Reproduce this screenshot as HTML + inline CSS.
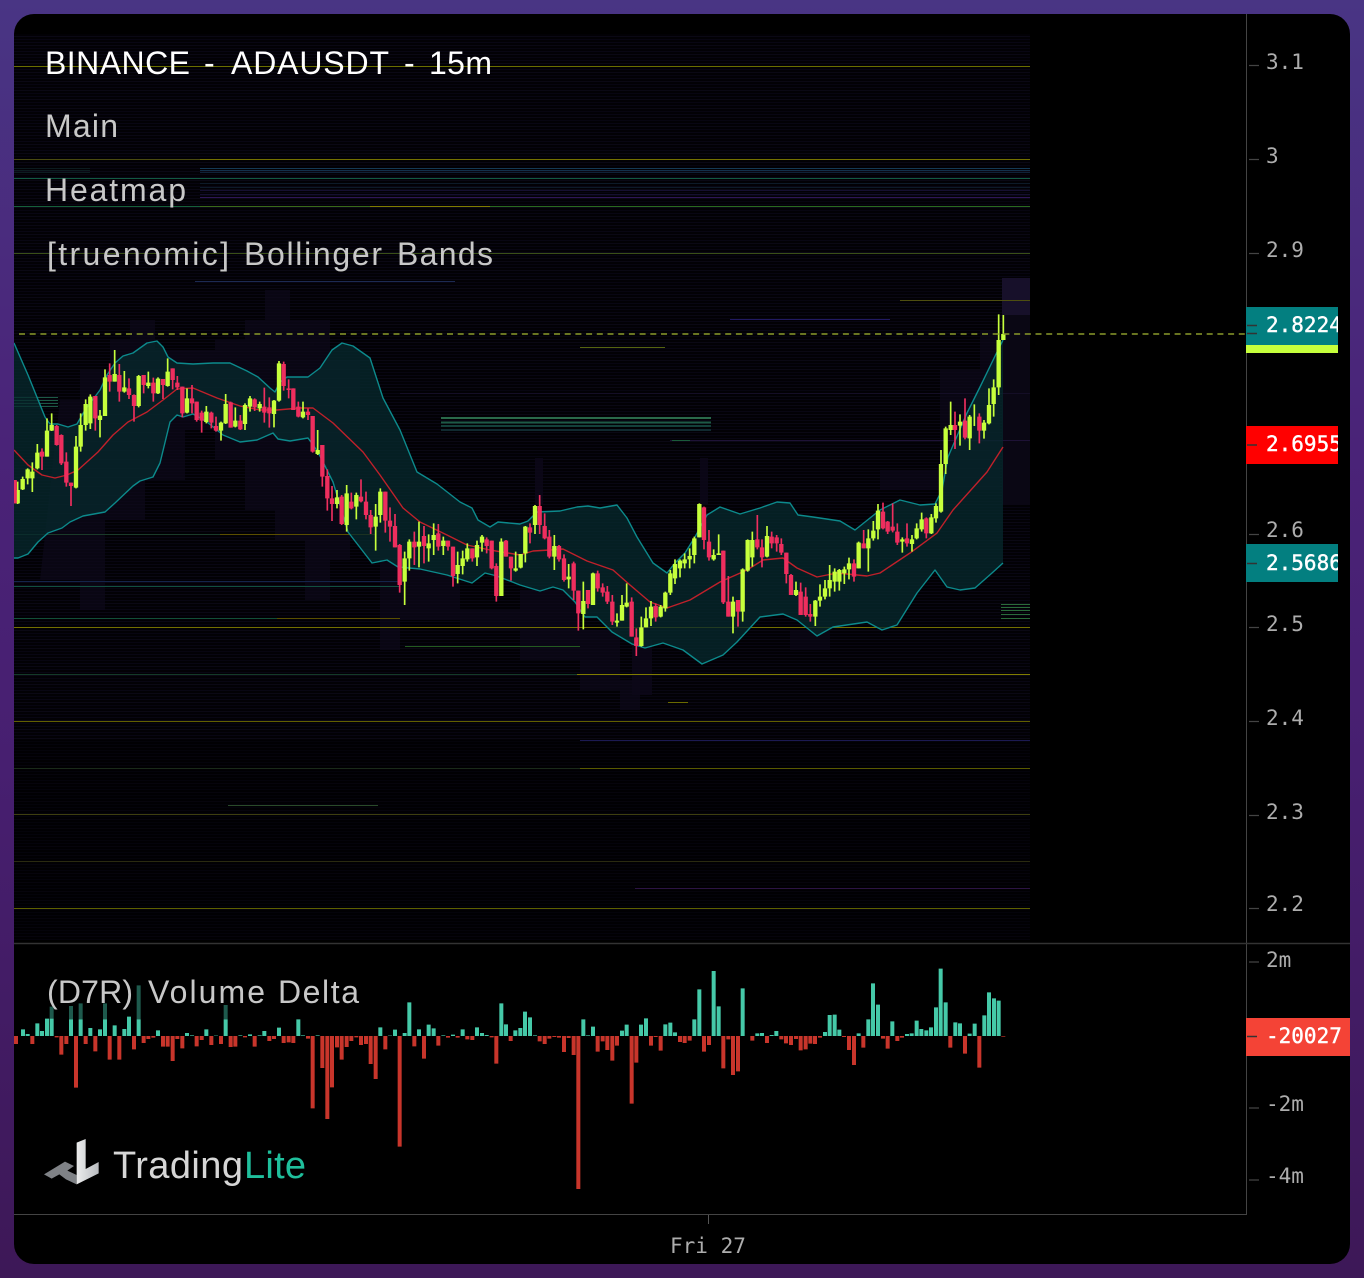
<!DOCTYPE html>
<html lang="en"><head><meta charset="utf-8"><title>TradingLite chart</title>
<style>html,body{margin:0;padding:0;width:1364px;height:1278px;overflow:hidden;background:#451b6a}svg{display:block}
.m{font-family:"Liberation Sans",sans-serif}.a{font-family:"DejaVu Sans Mono","Liberation Mono",monospace;font-size:21px;fill:#adadad}.w{fill:#fff;stroke:#fff;stroke-width:.4}</style></head>
<body>
<svg xmlns="http://www.w3.org/2000/svg" width="1364" height="1278" viewBox="0 0 1364 1278">
<defs>
<linearGradient id="bg" x1="0" y1="0" x2="0" y2="1"><stop offset="0" stop-color="#493584"/><stop offset=".35" stop-color="#4a2378"/><stop offset=".6" stop-color="#471f70"/><stop offset="1" stop-color="#3d1857"/></linearGradient>
<linearGradient id="lg" x1="0" y1="0" x2="1" y2="0"><stop offset="0" stop-color="#eceded"/><stop offset="1" stop-color="#b9bcc0"/></linearGradient>
<pattern id="st" width="16" height="9" patternUnits="userSpaceOnUse"><rect width="16" height="9" fill="#020105"/><rect y="0" width="16" height="1" fill="#0a0814"/><rect y="3" width="16" height="1" fill="#070511"/><rect y="6" width="16" height="1" fill="#080613"/></pattern>
<clipPath id="card"><rect x="14" y="14" width="1336" height="1250" rx="20"/></clipPath>
<clipPath id="ax"><rect x="1246" y="300" width="92" height="300"/></clipPath>
</defs>
<rect width="1364" height="1278" fill="url(#bg)"/>
<g clip-path="url(#card)">
<rect x="14" y="14" width="1336" height="1250" fill="#000"/>
<rect x="14" y="34" width="1016" height="906" fill="url(#st)"/>
<rect x="14" y="740" width="1016" height="200" fill="#000" opacity=".4"/>
<!-- heat volume columns -->
<g fill="#0d0819">
<path d="M60 400h20v-30h30v-30h20v-20h25v30h60v-10h30v-20h20v-30h25v30h40v40h30v40h-10v160h-20v40h-25v-60h-30v-30h-30v-50h-30v-30h-30v50h-40v40h-40v90h-25v-30h-40z" opacity=".7"/>
<path d="M380 500h20v70h60v40h60v-20h60v40h40v50h20v30h-20v-20h-40v-30h-60v-30h-60v-10h-60v30h-20z" opacity=".7"/>
<rect x="535" y="458" width="8" height="46" opacity=".8"/><rect x="700" y="458" width="8" height="46" opacity=".8"/>
<path d="M880 470h60v-100h40v-40h20v160h-120z" opacity=".7"/>
<rect x="1002" y="278" width="28" height="37" fill="#17102a"/>
<rect x="1002" y="315" width="28" height="190" fill="#0a0714"/>
<rect x="632" y="640" width="20" height="55" opacity=".8"/><rect x="790" y="630" width="40" height="20" opacity=".6"/>
</g>
<g fill="none" stroke-width="1">
<path d="M14 168.5H90M14 170.5H90M14 172.5H90" stroke="#0c1c20"/>
<path d="M200 168.5H1030" stroke="#153a55"/><path d="M200 170.5H1030" stroke="#12304a"/><path d="M200 172.5H1030" stroke="#0f2238"/>
<path d="M200 183.5H1030M200 187.5H1030" stroke="#0d1a28"/><path d="M200 190.5H1030M200 194.5H1030" stroke="#151030"/>
<path d="M14 66.5H1030" stroke="#6a6e00"/>
<path d="M14 159.5H200" stroke="#4a4a10"/><path d="M200 159.5H1030" stroke="#747000"/>
<path d="M14 178.5H1030" stroke="#125a42"/>
<path d="M200 197.5H1030" stroke="#2e1656"/>
<path d="M14 206.5H200" stroke="#16603a"/><path d="M200 206.5H370" stroke="#3a6a1a"/><path d="M370 206.5H490" stroke="#807c00"/><path d="M490 206.5H1030" stroke="#2a6a20"/>
<path d="M14 253.5H1030" stroke="#3a4f18"/>
<path d="M195 281.5H455" stroke="#1c2a52"/>
<path d="M900 300.5H1030" stroke="#4e4e10"/>
<path d="M730 319.5H890" stroke="#211a62"/>
<path d="M580 347.5H665" stroke="#556410"/>
<path d="M670 440.5H1030" stroke="#1e1236"/><path d="M672 440.5H690" stroke="#1a5a3a"/>
<path d="M400 393.5H1030" stroke="#140e26"/>
<path d="M14 534.5H220" stroke="#1a3a2a"/><path d="M220 534.5H375" stroke="#5a4e00"/>
<path d="M14 581.5H400" stroke="#14244a"/>
<path d="M14 586.5H400" stroke="#125040"/>
<path d="M14 618.5H277" stroke="#125038"/><path d="M277 618.5H400" stroke="#5a5000"/>
<path d="M14 627.5H1030" stroke="#747000"/>
<path d="M405 646.5H580" stroke="#245a20"/>
<path d="M14 674.5H577" stroke="#143a28"/><path d="M577 674.5H1030" stroke="#807c00"/>
<path d="M668 702.5H688" stroke="#6a6a00"/>
<path d="M14 721.5H1030" stroke="#625f00"/>
<path d="M580 740.5H1030" stroke="#1c1a52"/>
<path d="M14 768.5H580" stroke="#1a2a1a"/><path d="M580 768.5H1030" stroke="#5a5a00"/>
<path d="M228 805.5H378" stroke="#2a4a2a"/>
<path d="M14 814.5H1030" stroke="#3e3e10"/>
<path d="M14 861.5H1030" stroke="#2a2a10"/>
<path d="M635 888.5H1030" stroke="#2c1444"/>
<path d="M14 908.5H1030" stroke="#5f6000"/>
<path d="M14 397.5H58M14 400.5H58M14 403.5H58M14 406.5H58" stroke="#1d5a46"/>
<path d="M1001 604.5H1030M1001 607.5H1030M1001 610.5H1030M1001 614.5H1030M1001 618.5H1030" stroke="#2a6a3a"/>
</g>
<g fill="none" stroke-width="2">
<path d="M441 418H711" stroke="#2a6a4a"/><path d="M441 422.5H711" stroke="#1d5a46"/><path d="M441 426H711" stroke="#14403a"/><path d="M441 430H711" stroke="#102a30"/>
</g>
<!-- bollinger -->
<path fill="#072a2e" fill-opacity=".75" d="M14 343 28 375 45 417 50 424 58 424 68 427 77 424 85 410 100 390 107 375 115 363 123 356 133 353 147 343 157 341 163 347 168 357 177 363 193 364 213 363 230 363 247 371 258 377 270 388 275 392 280 382 287 377 308 377 320 368 332 350 342 343 353 346 370 358 383 398 400 430 417 472 437 484 460 502 472 508 478 520 490 527 498 522 520 524 528 521 537 512 560 511 577 507 588 506 600 508 617 505 627 518 637 537 653 563 667 573 675 563 685 553 695 537 707 515 720 507 740 514 760 508 777 502 790 503 798 515 813 517 840 521 855 530 880 510 900 500 920 505 935 504 942 490 948 457 967 413 980 387 997 352 1003 340V563L992 573 975 588 960 590 947 587 935 570 917 593 897 625 882 630 867 622 833 627 817 636 797 620 783 614 760 617 737 642 723 655 702 664 683 650 663 643 645 648 632 644 612 632 597 617 585 617 575 602 563 590 553 587 540 591 530 588 520 585 497 576 485 573 472 583 447 575 420 569 398 567 387 560 372 563 348 532 333 482 318 452 308 438 290 441 278 439 273 433 257 440 240 442 223 435 207 422 193 414 183 417 177 415 170 422 160 463 153 477 140 481 133 486 115 503 105 512 83 516 70 522 62 528 48 533 38 542 28 554 18 558 14 558Z"/>
<g fill="none" stroke-width="1.4" stroke-linejoin="round">
<path stroke="#0c8a8c" d="M14 343 28 375 45 417 50 424 58 424 68 427 77 424 85 410 100 390 107 375 115 363 123 356 133 353 147 343 157 341 163 347 168 357 177 363 193 364 213 363 230 363 247 371 258 377 270 388 275 392 280 382 287 377 308 377 320 368 332 350 342 343 353 346 370 358 383 398 400 430 417 472 437 484 460 502 472 508 478 520 490 527 498 522 520 524 528 521 537 512 560 511 577 507 588 506 600 508 617 505 627 518 637 537 653 563 667 573 675 563 685 553 695 537 707 515 720 507 740 514 760 508 777 502 790 503 798 515 813 517 840 521 855 530 880 510 900 500 920 505 935 504 942 490 948 457 967 413 980 387 997 352 1003 340"/>
<path stroke="#0c8a8c" d="M14 558 18 558 28 554 38 542 48 533 62 528 70 522 83 516 105 512 115 503 133 486 140 481 153 477 160 463 170 422 177 415 183 417 193 414 207 422 223 435 240 442 257 440 273 433 278 439 290 441 308 438 318 452 333 482 348 532 372 563 387 560 398 567 420 569 447 575 472 583 485 573 497 576 520 585 530 588 540 591 553 587 563 590 575 602 585 617 597 617 612 632 632 644 645 648 663 643 683 650 702 664 723 655 737 642 760 617 783 614 797 620 817 636 833 627 867 622 882 630 897 625 917 593 935 570 947 587 960 590 975 588 992 573 1003 563"/>
<path stroke="#c0202a" d="M14 450 28 465 42 475 55 478 67 475 78 470 98 452 113 435 128 422 147 412 163 400 177 389 193 388 217 398 240 406 260 410 277 410 300 408 313 408 333 423 363 452 380 475 403 508 420 522 447 535 467 545 490 550 520 555 533 551 550 550 563 549 587 561 613 570 630 585 650 602 667 608 690 600 720 582 747 570 763 560 783 558 797 568 817 577 837 573 867 576 880 573 910 553 937 533 953 510 987 472 1003 447"/>
</g>
<!-- candles left -->
<g transform="translate(0,300) scale(.33333)" fill="none">
<path stroke="#c6ff3c" stroke-width="5" d="M53 545V612M68 530V570M83 505V553M97 487V576M112 432V508M141 355V470M155 340V393M228 408V565M242 340V455M257 298V392M271 283V387M300 330V412M315 208V348M344 150V245M373 213V278M416 225V322M445 215V265M474 232V282M503 175V260M561 265V340M619 318V370M663 365V422M677 282V372M706 322V382M735 310V390M750 288V335M779 305V335M822 300V382M837 183V305M909 305V355M953 390V465M1011 570V625M1040 555V695M1069 578V658M1127 612V752M1141 565V668M1214 755V915M1228 718V812M1257 665V802M1286 703V785M1301 670V765M1330 710V765M1373 755V850M1388 752V823M1402 730V785M1431 722V798M1446 705V755M1504 715V888M1547 755V815"/>
<path stroke="#c6ff3c" stroke-width="13" d="M53 570V610M68 537V568M83 508V535M97 515V535M112 458V505M141 392V470M155 375V392M228 440V563M242 375V440M257 312V375M271 290V370M300 347V360M315 232V348M344 222V245M373 262V275M416 228V318M445 248V258M474 236V280M503 215V258M561 295V338M619 335V366M663 368V392M677 312V370M706 362V380M735 315V372M750 295V320M779 312V325M822 302V342M837 190V302M909 335V352M953 450V462M1011 592V612M1040 580V675M1069 585V620M1127 650V680M1141 575V645M1214 775V845M1228 725V775M1257 725V740M1286 730V745M1301 705V720M1330 722V738M1373 795V822M1388 775V798M1402 745V778M1431 735V772M1446 710V728M1504 725V888M1547 805V812"/>
<path stroke="#ee2e5e" stroke-width="5" d="M44 540V610M126 445V510M170 375V437M184 403V495M199 457V560M213 548V618M286 288V392M329 190V275M358 192V305M387 235V297M402 283V365M431 225V280M460 233V305M489 237V297M518 205V268M532 228V270M547 260V352M576 255V340M590 305V365M605 332V398M634 335V385M648 350V395M692 305V383M721 345V390M764 295V333M793 263V368M808 292V383M851 185V272M866 238V295M880 265V330M895 305V352M924 325V360M938 348V458M967 435V560M982 508V632M996 558V663M1025 585V675M1054 578V628M1083 538V607M1098 575V658M1112 630V702M1156 575V698M1170 622V725M1185 642V742M1199 732V878M1243 695V795M1272 678V790M1315 672V752M1344 722V752M1359 740V860M1417 745V785M1460 712V760M1475 722V808M1489 790V905M1518 720V770M1533 770V842"/>
<path stroke="#ee2e5e" stroke-width="13" d="M44 540V610M126 455V470M170 378V435M184 405V490M199 485V548M213 548V558M286 288V355M329 225V245M358 225V275M387 265V285M402 285V318M431 225V255M460 248V280M489 237V255M518 205V240M532 248V262M547 260V340M576 295V310M590 305V360M605 338V362M634 338V368M648 378V392M692 307V383M721 362V388M764 298V322M793 320V338M808 322V340M851 192V258M866 265V270M880 265V330M895 320V350M924 335V345M938 348V455M967 435V530M982 528V595M996 595V612M1025 590V672M1054 605V625M1083 590V604M1098 605V645M1112 645V682M1156 575V662M1170 662V680M1185 678V742M1199 735V855M1243 725V742M1272 708V738M1315 700V740M1344 722V740M1359 740V828M1417 745V775M1460 718V738M1475 722V805M1489 798V888M1518 722V770M1533 770V805"/>
</g>
<!-- candles right -->
<g transform="translate(520,400) scale(.33333)" fill="none">
<path stroke="#c6ff3c" stroke-width="5" d="M2 462V505M16 378V487M45 315V402M103 405V510M146 492V565M190 545V688M219 518V615M291 640V680M306 585V662M320 550V622M364 650V740M378 622V682M393 603V678M422 615V652M436 575V635M451 510V585M465 478V552M480 478V532M494 460V505M509 445V505M523 410V490M538 310V412M581 448V482M596 403V465M639 590V700M668 505V665M683 418V515M697 395V500M741 378V472M828 545V588M886 600V678M900 553V620M915 540V598M929 495V590M944 505V575M958 507V572M973 500V552M987 473V538M1016 425V505M1045 388V515M1060 363V422M1074 312V418M1147 412V458M1176 405V455M1190 370V418M1205 338V395M1234 342V402M1248 310V368M1263 150V338M1277 80V222M1292 5V105"/>
<path stroke="#c6ff3c" stroke-width="13" d="M2 462V503M16 380V460M45 318V375M103 438V470M146 530V538M190 603V642M219 520V615M291 662V668M306 615V662M320 608V620M364 682V738M378 655V682M393 620V655M422 620V650M436 578V625M451 520V578M465 492V535M480 482V505M494 478V490M509 468V478M523 415V465M538 312V412M581 465V478M596 460V465M639 605V650M668 508V635M683 420V512M697 420V472M741 408V470M828 570V585M886 602V650M900 590V602M915 565V590M929 540V565M944 515V545M958 510V545M973 508V520M987 490V508M1016 428V505M1045 415V445M1060 392V415M1074 332V388M1147 418V425M1176 418V432M1190 385V415M1205 358V388M1234 352V400M1248 318V355M1263 192V335M1277 85V192M1292 75V90"/>
<path stroke="#ee2e5e" stroke-width="5" d="M30 370V430M59 285V402M74 340V418M88 390V475M117 435V485M132 463V545M161 485V600M175 572V692M204 570V625M233 512V575M248 550V590M262 558V612M277 585V675M335 592V710M349 685V768M407 610V665M552 320V448M567 390V482M610 452V612M625 528V650M654 600V680M712 345V448M726 418V502M755 395V445M770 405V455M784 415V465M799 458V550M813 522V585M842 548V645M857 562V650M871 612V665M1002 478V545M1031 390V445M1089 308V388M1103 363V402M1118 310V397M1132 370V435M1161 370V440M1219 352V415"/>
<path stroke="#ee2e5e" stroke-width="13" d="M30 382V398M59 318V375M74 378V415M88 410V470M117 438V478M132 475V540M161 490V572M175 572V640M204 570V612M233 520V565M248 562V578M262 575V605M277 605V665M335 605V710M349 712V738M407 618V652M552 322V420M567 425V472M610 452V607M625 605V650M654 600V635M712 418V442M726 442V472M755 410V430M770 412V430M784 432V458M799 458V522M813 525V585M842 575V645M857 590V645M871 642V650M1002 490V530M1031 430V445M1089 335V385M1103 365V395M1118 380V392M1132 395V428M1161 415V430M1219 355V400"/>
</g>
<g transform="translate(900,270) scale(.33333)" fill="none">
<path stroke="#c6ff3c" stroke-width="5" d="M180 433V527M209 435V540M223 403V468M252 450V506M267 355V463M281 328V440M296 133V375M310 135V210"/>
<path stroke="#c6ff3c" stroke-width="13" d="M180 455V467M209 440V505M252 458V482M267 405V460M281 352V402M296 210V352M310 192V210"/>
<path stroke="#ee2e5e" stroke-width="5" d="M165 425V537M195 385V508M238 430V520"/>
<path stroke="#ee2e5e" stroke-width="13" d="M165 465V480M195 452V503M238 440V482"/>
</g>
<!-- price dashed line -->
<path d="M19 334H1246" stroke="#8a9a2a" stroke-width="1.5" stroke-dasharray="6 4.7" fill="none"/>
<!-- volume delta -->
<g transform="translate(0,960) scale(.33333)" fill="none" stroke-width="12">
<path stroke="#1e5a4d" d="M155 140V176M213 138V178M242 130V178M315 130V178M416 76V178"/>
<path stroke="#1e5a4d" d="M677 135V178"/>
<path stroke="#45c9a8" d="M69 228V208M83 228V222M112 228V190M126 228V213M141 228V176M155 228V176M213 228V178M242 228V178M271 228V204M300 228V208M315 228V178M344 228V196M373 228V207M387 228V170M416 228V178M474 228V211M561 228V219M576 228V226M619 228V208M648 228V227M677 228V178M721 228V226M750 228V223M779 228V226M793 228V213M837 228V203M895 228V178M909 228V226M953 228V226M1141 228V202M1170 228V227M1185 228V209M1214 228V219M1228 228V127M1257 228V208M1286 228V194M1301 228V205M1330 228V226M1359 228V224M1388 228V208M1431 228V202M1446 228V219M1460 228V225"/>
<path stroke="#c8352b" d="M48 228V252M97 228V252M170 228V232M184 228V284M199 228V252M228 228V383M257 228V252M286 228V274M329 228V299M358 228V299M402 228V268M431 228V249M445 228V237M460 228V233M489 228V260M503 228V260M518 228V303M532 228V237M547 228V265M590 228V259M605 228V240M634 228V255M663 228V252M692 228V261M706 228V260M735 228V232M764 228V260M808 228V243M822 228V237M851 228V249M866 228V247M880 228V249M924 228V236M938 228V445M967 228V324M982 228V477M996 228V382M1011 228V262M1025 228V299M1040 228V261M1054 228V243M1069 228V232M1083 228V255M1098 228V252M1112 228V312M1127 228V357M1156 228V268M1199 228V560M1243 228V259M1272 228V296M1315 228V257M1344 228V233M1373 228V233M1402 228V238M1417 228V240M1475 228V232M1489 228V311"/>
</g>
<g transform="translate(500,960) scale(.33333)" fill="none" stroke-width="12">
<path stroke="#45c9a8" d="M4 228V130M18 228V193M46 228V211M61 228V204M75 228V155M90 228V172M105 228V226M250 228V178M264 228V226M279 228V200M366 228V212M380 228V194M423 228V194M438 228V175M496 228V193M511 228V188M525 228V217M583 228V178M598 228V88M641 228V33M656 228V139M728 228V85M772 228V220M786 228V219M815 228V225M829 228V213M975 228V216M989 228V165M1004 228V164M1018 228V209M1076 228V220M1105 228V178M1119 228V70M1134 228V134M1177 228V184M1221 228V222M1235 228V220M1250 228V182M1264 228V207M1279 228V211M1293 228V202M1308 228V142M1322 228V26M1337 228V127M1366 228V187M1380 228V190M1409 228V221M1424 228V191M1453 228V166M1467 228V97M1482 228V115M1496 228V122"/>
<path stroke="#c8352b" d="M32 228V243M119 228V244M134 228V252M148 228V236M163 228V231M177 228V233M192 228V276M206 228V234M221 228V285M235 228V687M293 228V275M308 228V244M322 228V270M337 228V302M351 228V257M395 228V431M409 228V308M453 228V257M467 228V231M482 228V272M540 228V246M554 228V249M569 228V242M612 228V275M627 228V255M670 228V325M685 228V238M699 228V345M714 228V334M757 228V242M801 228V249M844 228V238M858 228V250M873 228V255M888 228V237M902 228V271M917 228V268M931 228V251M945 228V252M960 228V233M1032 228V231M1047 228V270M1062 228V315M1090 228V263M1149 228V236M1163 228V266M1192 228V243M1206 228V233M1351 228V263M1395 228V281M1438 228V323M1510 228V230"/>
</g>
<!-- separators -->
<g fill="none" stroke-width="1">
<path d="M1246.5 14V1214.5H14" stroke="#444"/>
<path d="M14 943.5H1350" stroke="#333" stroke-width="1.5"/>
<path d="M708.5 1215V1224" stroke="#555"/>
</g>
<!-- axis boxes -->
<rect x="1246" y="307" width="92" height="38" fill="#037f80"/>
<rect x="1246" y="345" width="92" height="8" fill="#c6ff3c"/>
<rect x="1246" y="426" width="92" height="38" fill="#f00"/>
<rect x="1246" y="544" width="92" height="38" fill="#037f80"/>
<rect x="1246" y="1018" width="104" height="38" fill="#f44336"/>
<path d="M1249 65.5h10M1249 159.5h10M1249 253.5h10M1249 534.5h10M1249 627.5h10M1249 721.5h10M1249 815.5h10M1249 908.5h10M1249 962h10M1249 1108h10M1249 1180h10" stroke="#444" stroke-width="1.3" fill="none"/>
<path d="M1247 325.5h10M1247 333.5h10M1247 445h10M1247 563.5h10M1247 1036.5h10" stroke="#333" stroke-width="1.5" fill="none"/>
<text class="a" x="1266" y="69">3.1</text>
<text class="a" x="1266" y="163">3</text>
<text class="a" x="1266" y="257">2.9</text>
<text class="a" x="1266" y="537">2.6</text>
<text class="a" x="1266" y="631">2.5</text>
<text class="a" x="1266" y="725">2.4</text>
<text class="a" x="1266" y="819">2.3</text>
<text class="a" x="1266" y="911">2.2</text>
<text class="a" x="1266" y="967">2m</text>
<text class="a" x="1266" y="1111">-2m</text>
<text class="a" x="1266" y="1183">-4m</text>
<text class="a" x="670" y="1253">Fri 27</text>
<g clip-path="url(#ax)">
<text class="a w" x="1266" y="332">2.8224</text>
<text class="a w" x="1266" y="451">2.6955</text>
<text class="a w" x="1266" y="570">2.5686</text>
</g>
<text class="a w" x="1266" y="1043">-20027</text>
<!-- labels -->
<g class="m" font-size="32" fill="#fff">
<text x="45" y="74" textLength="145">BINANCE</text><text x="204" y="74">-</text><text x="231" y="74" textLength="158">ADAUSDT</text><text x="404" y="74">-</text><text x="429" y="74" textLength="63">15m</text>
</g>
<g class="m" font-size="32" fill="#c8c8c8">
<text x="45" y="137" textLength="73">Main</text>
<text x="45" y="201" textLength="141">Heatmap</text>
<text x="47" y="265" textLength="182">[truenomic]</text><text x="244" y="265" textLength="138">Bollinger</text><text x="397" y="265" textLength="96">Bands</text>
<text x="47" y="1003" textLength="86">(D7R)</text><text x="148" y="1003" textLength="117">Volume</text><text x="278" y="1003" textLength="81">Delta</text>
</g>
<!-- logo -->
<g transform="translate(30,1130) scale(.33333)">
<path fill="#7f8286" d="M42 133 105 95 132 108 112 122 140 135V163L108 148 88 133 65 146Z"/>
<path fill="url(#lg)" d="M140 38 167 27V117L206 96V130L140 163Z"/>
</g>
<text class="m" x="113" y="1178" font-size="38" fill="#d6d6d6" textLength="130">Trading</text>
<text class="m" x="244" y="1178" font-size="38" fill="#1fbf9c" textLength="62">Lite</text>
</g>
</svg>
</body></html>
